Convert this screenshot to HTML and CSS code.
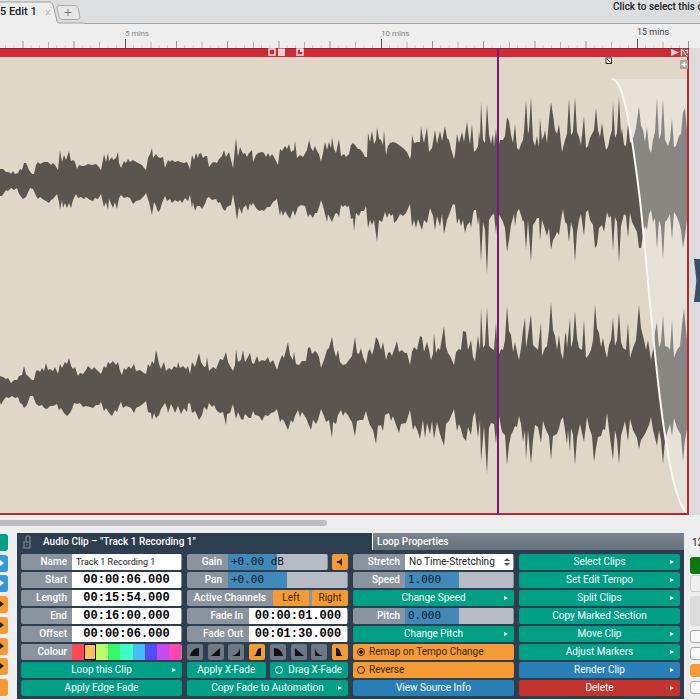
FILE: index.html
```html
<!DOCTYPE html>
<html lang="en">
<head>
<meta charset="utf-8">
<title>Edit 1</title>
<link rel="stylesheet" href="styles.css">
</head>
<body>
<header class="tabs">
  <svg class="tab-shape" width="84" height="24" viewBox="0 0 84 24" aria-hidden="true">
    <path d="M0 2H50Q52 2 53 5L57 22Q57 23 59 23H84V24H0Z" fill="#eee"/>
    <path d="M0 2H50Q52 2 53 5L57 21Q57 23 59 23H84" fill="none" stroke="#a0a0a0"/>
    <path d="M59 5.500H75Q77 6 78 8L80 17Q80 19 78 19.500H62Q60 19 59 17L57 7Q57 6 59 5.500Z" fill="#e6e6e6" stroke="#aaa"/>
    <path d="M64.500 12.500H71.500M68 9V16" stroke="#777"/>
    <path d="M46 10L50 15M50 10L46 15" stroke="#b8b8b8"/>
  </svg>
  <a class="tab" href="#edit">5 Edit 1</a>
  <p class="hint">Click to select this clip</p>
</header>
<div class="ruler">
  <svg class="ticks" width="100%" height="25" aria-hidden="true">
    <defs>
      <pattern id="tick" patternUnits="userSpaceOnUse" x="125" y="0" width="256" height="25">
        <path d="M8.500 21v3M17 21v3M34.100 21v3M42.600 21v3M59.700 21v3M68.200 21v3M85.300 21v3M93.800 21v3M110.900 21v3M119.400 21v3M136.500 21v3M145 21v3M162.100 21v3M170.600 21v3M187.700 21v3M196.200 21v3M213.300 21v3M221.800 21v3M238.900 21v3M247.400 21v3" stroke="#c8c8c8"/>
        <path d="M26 18v6M77 18v6M128.500 18v6M179.500 18v6M230.500 18v6" stroke="#b0b0b0"/>
        <path d="M51.500 17v7M102.500 17v7M154 17v7M205 17v7" stroke="#999"/>
        <path d="M.500 15v9" stroke="#555"/>
      </pattern>
    </defs>
    <rect width="689" height="25" fill="url(#tick)"/>
  </svg>
  <span class="mark m5">5 mins</span><span class="mark m10">10 mins</span><span class="mark m15">15 mins</span>
</div>
<main class="track">
  <svg class="clip" viewBox="0 48 689 467" preserveAspectRatio="none" role="img" aria-label="Track 1 Recording 1 waveform">
    <defs>
      <clipPath id="fade"><path d="M612 79C624 79 632 135 640 200C650 290 663 500 688 514V79Z"/></clipPath>
      <g id="wave">
        <path d="M0 169L3 169 6 172 9 172 11 174 13 171 15 174 18 173 20 169 22 170 24 163 26 163 29 170 32 174 34 174 36 165 38 162 40 164 44 162 48 162 51 165 53 163 55 165 58 170 60 150 62 162 64 155 66 160 69 151 71 161 73 160 75 162 77 169 79 165 82 166 84 166 88 164 92 165 96 164 98 166 101 170 103 160 104 154 106 162 108 153 109 161 112 157 113 160 116 158 118 152 119 163 121 168 124 161 126 163 128 159 130 162 133 160 138 163 142 165 144 168 146 170 148 158 150 154 152 148 153 158 156 154 158 157 160 158 163 157 165 168 168 160 170 162 172 160 175 162 178 161 180 162 184 163 187 162 190 169 192 155 194 160 196 153 198 158 199 154 201 153 203 158 205 156 207 156 209 167 212 163 214 162 217 163 219 159 222 156 224 150 226 157 229 152 231 160 233 168 234 158 236 138 238 157 240 147 243 154 245 153 247 157 249 153 252 150 253 162 256 155 258 153 262 152 264 153 266 157 268 153 270 157 272 154 274 157 278 165 280 149 282 151 285 146 287 149 289 144 291 152 294 150 295 141 297 158 300 155 303 157 307 150 309 140 311 148 313 151 315 146 317 151 319 154 321 162 323 153 325 142 327 150 329 142 331 148 332 137 334 149 336 153 339 139 341 156 344 154 346 157 349 154 351 145 353 143 355 145 358 149 360 149 363 153 365 157 367 157 368 133 370 142 372 131 374 144 376 140 377 127 379 139 381 140 383 145 384 130 386 155 388 146 390 143 393 142 396 143 399 145 403 148 407 152 410 159 411 155 412 135 414 143 417 142 420 142 421 126 423 139 424 143 427 127 429 152 432 148 435 130 437 144 440 131 442 141 445 126 447 138 449 140 451 149 454 159 455 154 457 134 459 143 462 132 464 142 467 122 469 138 470 144 472 124 474 152 476 150 478 146 479 131 480 140 481 102 483 140 485 143 487 104 489 134 491 144 493 134 494 147 496 128 498 150 500 140 503 140 505 136 507 117 509 121 511 135 513 143 515 124 517 148 519 150 521 144 523 140 524 132 526 100 528 134 529 130 531 97 533 140 535 146 537 136 539 147 540 118 542 140 544 135 545 130 547 143 549 120 551 102 553 115 555 130 557 134 559 124 561 143 562 152 565 140 567 134 569 98 571 135 573 132 575 97 577 132 579 137 581 145 584 116 586 148 588 146 590 138 592 134 594 130 596 108 598 130 600 137 602 123 604 138 606 150 608 147 610 137 612 130 613 102 615 138 617 133 619 97 621 134 622 128 624 145 626 146 628 124 630 143 632 140 634 136 636 128 638 113 639 106 641 126 643 130 645 142 647 127 649 148 651 153 653 140 655 132 657 97 659 140 661 134 663 98 665 140 668 146 670 140 672 118 674 147 676 146 679 136 681 134 683 112 685 108 687 130L687 220 685 235 683 248 681 230 679 222 676 215 674 212 672 240 670 214 667 220 665 222 663 260 661 226 659 220 657 249 655 218 653 222 651 210 649 214 647 230 645 226 643 235 641 248 639 248 637 232 635 228 632 222 630 213 628 238 626 216 624 214 621 226 619 263 617 222 615 217 613 250 611 216 609 218 607 212 604 232 602 225 599 228 597 245 595 248 593 225 590 220 588 210 586 212 584 236 581 214 579 220 577 232 575 262 573 230 571 222 569 242 567 224 565 222 563 209 561 220 559 235 557 232 555 237 553 240 551 250 549 228 547 236 544 226 542 220 540 241 539 218 537 218 535 222 533 225 531 262 528 220 526 250 524 220 523 222 521 215 519 209 517 212 515 226 514 214 511 225 509 240 507 252 505 228 503 222 500 216 498 214 496 234 494 214 492 215 489 220 487 275 485 230 483 222 481 262 479 216 478 225 476 210 474 210 473 214 471 228 470 222 467 225 465 233 463 220 461 226 459 218 457 224 455 205 453 204 450 212 447 220 444 234 442 214 440 226 437 216 435 230 433 216 430 208 427 223 424 220 422 230 420 225 418 219 416 228 414 220 412 227 410 204 406 213 403 216 400 214 397 220 394 223 393 214 391 216 389 213 387 218 385 212 382 222 379 220 377 242 374 220 372 225 370 220 368 228 366 206 364 211 361 211 359 216 356 213 354 231 353 218 351 219 349 206 347 207 345 205 343 207 341 205 339 217 337 213 335 214 332 222 330 218 328 214 327 222 325 214 323 206 321 200 320 204 317 213 315 213 313 218 310 214 308 217 305 206 301 205 298 207 295 216 293 210 290 219 288 216 285 211 283 216 281 210 280 216 277 199 273 202 270 207 267 207 264 211 262 210 259 211 256 208 253 203 251 206 250 203 248 211 246 205 243 208 242 214 239 207 237 220 235 206 233 194 231 205 227 207 225 211 223 209 220 202 218 203 216 199 212 200 209 197 207 198 205 204 202 209 200 206 197 206 195 211 193 202 192 208 190 195 188 201 185 198 182 203 180 200 178 202 175 200 172 203 170 199 167 201 165 196 162 203 160 210 158 212 156 206 154 202 152 215 151 211 149 202 146 193 144 196 140 200 136 201 133 204 130 198 127 197 124 198 121 195 119 198 117 209 115 202 113 208 109 199 108 210 106 202 104 207 101 194 98 199 95 198 93 201 90 200 86 197 84 199 81 197 78 198 76 194 73 200 71 208 69 203 67 208 65 203 63 208 62 200 60 210 59 202 57 194 53 199 51 200 49 203 46 201 44 200 40 197 38 199 36 196 33 189 30 188 26 197 23 199 19 194 17 188 14 190 11 188 8 191 6 190 2 196 0 196Z"/>
        <path d="M0 376L3 377 6 379 8 378 11 383 14 380 17 380 19 376 22 375 24 366 26 374 29 377 32 380 34 380 36 371 38 370 40 372 42 368 44 371 46 363 48 370 50 369 53 371 55 367 58 374 60 364 62 368 65 362 67 364 69 358 71 366 73 369 75 367 78 376 80 373 83 374 86 370 88 366 90 368 92 370 94 367 97 370 101 374 104 366 106 368 108 362 110 364 113 361 116 365 118 362 120 371 122 375 124 368 126 370 129 366 131 369 134 364 136 371 140 370 144 373 146 374 148 364 150 367 152 361 154 364 156 350 157 354 159 364 161 369 164 362 166 371 169 368 172 370 174 366 177 368 178 362 180 368 183 366 186 369 188 366 190 374 192 362 195 367 197 360 199 353 201 362 204 367 206 366 207 357 209 371 213 367 216 369 218 364 220 359 223 360 226 352 228 362 230 366 233 371 235 365 236 349 238 362 241 360 243 350 245 362 248 357 250 353 252 363 254 364 257 356 259 362 262 360 265 361 268 357 270 363 273 360 277 370 279 363 282 355 284 358 288 342 290 355 293 360 294 352 296 364 299 365 302 361 306 361 308 348 310 347 312 354 315 351 317 353 319 357 321 368 324 360 327 350 329 348 332 337 334 350 336 357 338 350 340 362 343 365 346 364 349 360 352 356 355 337 357 353 359 354 361 348 363 357 366 364 368 352 370 349 372 355 374 348 376 337 378 340 381 350 383 342 386 360 388 353 390 352 392 356 394 350 397 341 399 352 402 350 405 353 407 353 410 365 412 352 414 347 417 350 420 336 422 337 424 352 427 342 429 350 431 360 433 354 434 333 436 353 438 348 440 350 444 326 446 347 448 353 450 356 454 365 456 352 459 349 461 350 463 331 466 332 468 350 470 344 471 340 473 357 475 361 478 336 480 350 481 308 483 348 485 345 487 307 489 346 491 348 494 350 496 322 498 357 501 349 503 350 505 340 507 306 509 331 511 335 513 352 515 342 517 352 519 360 521 348 523 330 525 318 526 348 528 335 531 314 533 345 536 348 538 350 541 322 542 356 545 348 547 346 549 330 551 302 553 330 555 336 557 350 559 335 561 353 563 359 565 336 566 332 567 348 570 318 571 348 573 340 575 311 577 338 579 348 582 350 584 320 586 358 588 356 591 350 593 340 595 305 597 328 599 333 601 347 603 338 605 350 607 358 609 345 611 340 613 318 615 346 617 340 619 312 621 342 623 348 626 350 628 322 630 358 633 348 636 340 639 305 641 328 644 340 646 350 648 340 651 360 653 350 655 332 657 322 659 348 661 342 663 315 665 346 668 347 670 350 672 320 674 358 677 350 680 346 682 325 684 308 686 330 687 340L687 430 685 440 683 462 681 435 677 428 674 418 672 436 670 424 668 430 665 440 663 464 661 440 659 430 657 446 653 430 651 417 649 425 645 434 641 440 639 449 637 438 633 430 630 419 628 441 625 421 621 436 619 464 617 440 615 430 613 460 609 430 607 413 605 430 603 429 601 436 598 437 596 448 594 462 592 436 589 427 587 417 584 442 580 424 577 438 575 465 573 435 571 428 570 452 568 430 567 444 565 430 563 417 561 420 559 428 557 434 553 436 551 460 549 436 546 430 543 421 541 443 538 427 535 425 533 440 531 464 528 430 526 460 525 430 523 442 521 424 519 416 517 427 515 426 513 431 511 435 509 445 507 465 505 435 502 432 499 416 498 420 496 444 494 424 491 423 489 428 487 474 484 426 481 462 480 420 478 438 475 412 473 417 471 435 468 427 466 441 463 437 461 429 459 424 457 431 454 409 449 421 446 424 444 446 440 434 437 422 434 439 432 421 430 434 427 423 425 438 423 420 420 439 418 432 415 425 413 430 410 410 406 423 401 424 399 433 395 422 393 416 391 421 389 413 385 415 383 431 381 425 378 426 376 444 373 430 370 425 368 419 366 411 363 420 360 420 357 421 355 436 352 422 350 419 348 415 345 412 343 416 341 410 338 415 336 424 333 422 332 438 329 420 326 422 324 416 321 409 318 420 316 424 313 420 311 430 308 423 306 418 302 412 300 417 298 410 295 416 293 423 291 420 288 430 284 421 282 419 280 422 277 409 274 412 271 413 268 416 265 415 262 421 259 416 255 415 253 411 251 418 249 418 245 414 243 420 241 419 238 412 236 419 233 404 230 413 227 414 226 425 223 412 220 413 217 411 214 405 212 407 209 403 207 410 204 407 202 415 199 420 197 415 195 411 192 413 190 403 188 404 187 412 184 408 181 414 178 406 175 413 173 408 171 404 168 413 167 408 165 403 161 409 159 415 156 418 154 413 152 420 151 413 148 412 146 401 144 403 140 406 136 408 134 413 131 408 129 407 126 406 123 408 121 402 119 406 117 412 115 410 112 416 109 413 106 408 104 411 101 402 99 405 96 405 93 408 90 407 86 406 83 407 80 403 77 404 74 403 72 409 70 413 67 416 64 413 61 408 59 410 57 404 53 406 50 406 47 409 44 408 42 405 39 406 36 404 33 396 30 396 27 405 24 408 22 404 20 403 18 397 15 398 12 396 9 398 6 397 3 401 1 405 0 402Z"/>
      </g>
    </defs>
    <rect y="48" width="689" height="467" fill="#e0d7c8"/>
    <use href="#wave" fill="#5a554e"/>
    <g clip-path="url(#fade)">
      <rect x="600" y="79" width="89" height="436" fill="#e8e1d8"/>
      <use href="#wave" fill="#888680"/>
    </g>
    <path d="M612 79C624 79 632 135 640 200C650 290 663 500 688 514" fill="none" stroke="#faf7f2" stroke-width="2"/>
    <rect y="48" width="689" height="9" fill="#cf2b37"/>
    <path d="M0 48H689" stroke="#6e1b22"/>
    <path d="M0 514H688V57" fill="none" stroke="#b92734" stroke-width="2"/>
    <g>
      <rect x="269" y="49" width="6" height="6" fill="#cf2b37" stroke="#fbe3e3" stroke-width="1.500"/>
      <rect x="278" y="48.500" width="7" height="7.500" fill="#f8cfd2"/>
      <rect x="297" y="49" width="6" height="6" fill="#cf2b37" stroke="#fbe3e3" stroke-width="1.500"/>
      <path d="M300 49H303V52H300Z" fill="#fbe3e3"/>
      <path d="M671 49L679 52.500 671 56Z" fill="#f8dde0"/>
      <rect x="680" y="48.500" width="8" height="8.500" fill="#b95a5c"/>
      <path d="M681.500 49V56M681.500 50C685 50 684 55 687.500 56M685 50.500H687.500V53" fill="none" stroke="#fff"/>
      <rect x="606" y="58" width="5.500" height="5.500" fill="#fff" stroke="#333"/>
      <path d="M607 59L610.500 62.500" stroke="#333"/>
      <rect x="680" y="60" width="8" height="9" fill="#aca59c"/>
      <path d="M681.500 64.500H687M684.300 62V67" stroke="#fff" stroke-width="1.500"/>
    </g>
    <path d="M498 48V515" stroke="#83147f" stroke-width="2"/>
  </svg>
  <aside class="gutter"><span class="handle"></span></aside>
</main>
<div class="scroll"><span class="thumb"></span></div>
<footer class="dock">
  <nav class="strip left" aria-label="Tools">
    <button class="green"></button><button class="sky"><i class="arrow"></i></button><button class="sky"><i class="arrow"></i></button><button class="orange"><i class="arrow"></i></button><button class="orange"><i class="arrow"></i></button><button class="orange"><i class="arrow"></i></button><button class="orange"><i class="arrow"></i></button><button class="orange"></button>
  </nav>
  <section class="panel">
    <div class="titles">
      <h2 class="title">
        <svg class="lock" width="10" height="14" viewBox="0 0 10 14" aria-hidden="true"><path d="M4 6V3Q4 1 6 1Q8 1 8 3V6" fill="none" stroke="#6f7c88" stroke-width="1.500"/><path d="M2 7H8V13H2Z" fill="none" stroke="#6f7c88" stroke-width="1.500"/><path d="M5 9V11" stroke="#6f7c88"/></svg>
        <span>Audio Clip – "Track 1 Recording 1"</span>
      </h2>
      <h2 class="title other">Loop Properties</h2>
    </div>
    <div class="cols">
      <div class="col first">
        <div class="row"><label for="name">Name</label><input id="name" class="name" value="Track 1 Recording 1"></div>
        <div class="row"><label for="start">Start</label><input id="start" class="time" value="00:00:06.000"></div>
        <div class="row"><label for="length">Length</label><input id="length" class="time" value="00:15:54.000"></div>
        <div class="row"><label for="end">End</label><input id="end" class="time" value="00:16:00.000"></div>
        <div class="row"><label for="offset">Offset</label><input id="offset" class="time" value="00:00:06.000"></div>
        <div class="row"><span class="label">Colour</span><div class="swatches"><button class="c1" aria-label="Red"></button><button class="c2" aria-label="Orange"></button><button class="c3" aria-label="Lime"></button><button class="c4" aria-label="Green"></button><button class="c5" aria-label="Aqua"></button><button class="c6" aria-label="Sky"></button><button class="c7" aria-label="Blue"></button><button class="c8" aria-label="Violet"></button><button class="c9" aria-label="Pink"></button></div></div>
        <button class="btn green">Loop this Clip<i class="arrow"></i></button>
        <button class="btn green">Apply Edge Fade</button>
      </div>
      <div class="col second">
        <div class="pair"><div class="row grow"><label for="gain">Gain</label><input id="gain" class="level half" value="+0.00 dB"></div><button class="btn orange icon" aria-label="Mute"><svg width="8" height="8" viewBox="0 0 8 8"><path d="M1 3H3L6 0V8L3 5H1Z" fill="#3a2508"/></svg></button></div>
        <div class="row"><label for="pan">Pan</label><input id="pan" class="level half" value="+0.00"></div>
        <div class="row channels"><span class="label">Active Channels</span><button class="btn orange">Left</button><button class="btn orange">Right</button></div>
        <div class="row fades"><label for="fin">Fade In</label><input id="fin" class="time" value="00:00:01.000"></div>
        <div class="row fades"><label for="fout">Fade Out</label><input id="fout" class="time" value="00:01:30.000"></div>
        <div class="shapes">
          <button aria-label="Fade in 1"><svg viewBox="0 0 16 16"><path d="M3 12Q5 4 12 4V12Z"/></svg></button>
          <button aria-label="Fade in 2"><svg viewBox="0 0 16 16"><path d="M3 12L12 4V12Z"/></svg></button>
          <button aria-label="Fade in 3"><svg viewBox="0 0 16 16"><path d="M4 12Q11 10 12 4V12Z"/></svg></button>
          <button class="orange" aria-label="Fade in 4"><svg viewBox="0 0 16 16"><path d="M4 12C9 12 6 4 12 4V12Z"/></svg></button>
          <button aria-label="Fade out 1"><svg viewBox="0 0 16 16"><path d="M4 12V4Q11 4 13 12Z"/></svg></button>
          <button aria-label="Fade out 2"><svg viewBox="0 0 16 16"><path d="M4 12V4L13 12Z"/></svg></button>
          <button aria-label="Fade out 3"><svg viewBox="0 0 16 16"><path d="M4 12V4Q5 10 12 12Z"/></svg></button>
          <button class="orange" aria-label="Fade out 4"><svg viewBox="0 0 16 16"><path d="M4 12V4C10 4 7 12 12 12Z"/></svg></button>
        </div>
        <div class="pair"><button class="btn green">Apply X-Fade</button><button class="btn green"><i class="ring"></i>Drag X-Fade</button></div>
        <button class="btn green">Copy Fade to Automation<i class="arrow"></i></button>
      </div>
      <div class="col third">
        <div class="row"><label for="stretch">Stretch</label><div class="pick"><select id="stretch"><option>No Time-Stretching</option></select><svg class="updown" width="6" height="8" viewBox="0 0 6 8" aria-hidden="true"><path d="M0 3L3 0 6 3ZM0 5L3 8 6 5Z" fill="#555"/></svg></div></div>
        <div class="row"><label for="speed">Speed</label><input id="speed" class="level half" value="1.000"></div>
        <button class="btn green">Change Speed<i class="arrow"></i></button>
        <div class="row"><label for="pitch">Pitch</label><input id="pitch" class="level half" value="0.000"></div>
        <button class="btn green">Change Pitch<i class="arrow"></i></button>
        <label class="btn orange toggle"><input type="checkbox" checked>Remap on Tempo Change</label>
        <label class="btn orange toggle"><input type="checkbox">Reverse</label>
        <button class="btn blue">View Source Info</button>
      </div>
      <div class="col">
        <button class="btn green">Select Clips<i class="arrow"></i></button>
        <button class="btn green">Set Edit Tempo<i class="arrow"></i></button>
        <button class="btn green">Split Clips<i class="arrow"></i></button>
        <button class="btn green">Copy Marked Section</button>
        <button class="btn green">Move Clip<i class="arrow"></i></button>
        <button class="btn green">Adjust Markers<i class="arrow"></i></button>
        <button class="btn blue">Render Clip<i class="arrow"></i></button>
        <button class="btn red">Delete<i class="arrow"></i></button>
      </div>
    </div>
  </section>
  <aside class="strip right" aria-label="Transport">
    <span class="tempo">120</span><button class="play"></button><button class="plain"></button><span class="block"></span><button class="box"></button><button class="box"></button><button class="box amber"></button><button class="box"></button>
  </aside>
</footer>
</body>
</html>
```
FILE: styles.css
```css
* { box-sizing: border-box; }
body {
  margin: 0;
  height: 100vh;
  overflow: hidden;
  display: flex;
  flex-direction: column;
  background: #eee;
  font: 10px/16px Roboto, sans-serif;
  color: #222;
}
button, input, select { font: inherit; color: inherit; border: 0; margin: 0; padding: 0; min-width: 0; }

.tabs {
  position: relative;
  display: flex;
  justify-content: space-between;
  height: 24px;
  background: #dcddde;
  border-bottom: 1px solid #a0a0a0;
}
.tab-shape { position: absolute; left: 0; top: 0; }
.tab { position: relative; color: #222; text-decoration: none; font-size: 11px; font-weight: 500; line-height: 24px; }
.hint { margin: 0; width: 87px; overflow: hidden; white-space: nowrap; line-height: 14px; font-weight: 500; }

.ruler { position: relative; height: 24px; }
.ticks { display: block; }
.mark { position: absolute; top: 2px; font-size: 8px; color: #888; }
.m5 { left: 125px; }
.m10 { left: 381px; }
.m15 { left: 637px; top: 0; font-size: 9px; color: #444; }

.track { flex: 1; min-height: 0; display: flex; }
.clip { flex: 1; min-width: 0; height: 100%; display: block; }
.gutter { position: relative; width: 11px; background: #dcdcdc; }
.handle {
  position: absolute;
  right: 0;
  top: 211px;
  width: 6px;
  height: 43px;
  background: #34506a;
  clip-path: polygon(0 0, 100% 0, 100% 100%, 0 100%, 40% 50%);
}

.scroll { height: 18px; padding-top: 5px; }
.thumb { display: block; width: 327px; height: 6px; border-radius: 0 3px 3px 0; background: #bebebe; }

.dock { display: flex; align-items: flex-start; height: 167px; }
.strip { display: flex; flex-direction: column; }
.left { width: 17px; height: 162px; margin-top: 1px; padding-right: 9px; justify-content: space-between; }
.left button { position: relative; height: 17px; border-radius: 0 3px 3px 0; }
.left .arrow { left: 0; right: auto; top: 5px; border-width: 3px 0 3px 4px; }
.left .orange .arrow { border-left-color: #222; }

.panel { flex: 1; min-width: 0; background: #2c3e50; }
.titles { display: grid; grid-template-columns: 355px 1fr; height: 17px; }
.title { display: flex; align-items: center; margin: 0; padding-left: 5px; gap: 11px; font-size: 10px; font-weight: 500; color: #fff; white-space: nowrap; line-height: 17px; }
.other { padding-left: 4px; border-left: 1px solid #fff; background: linear-gradient(#7a858e, #65717b); }
.cols { display: grid; grid-template-columns: repeat(4, 1fr); gap: 5px; padding: 4px 4px 3px; }
.col { display: grid; grid-template-rows: repeat(8, 16px); grid-template-columns: minmax(0, 1fr); gap: 2px; }

.row { display: flex; background: #8a949e; border-radius: 2px; overflow: hidden; padding-right: 1px; }
.row > label, .label { flex: none; width: 51px; padding-right: 5px; text-align: right; color: #fff; font-weight: 500; white-space: nowrap; }
.second .label, .second label { width: 41px; padding-right: 6px; }
.third .row > label { width: 52px; }
.second .fades label { width: 62px; }
.row input, .pick, .swatches { flex: 1; }
.name, .time { background: #fff; color: #222; }
.name { padding-left: 4px; font-size: 9px; }
.time { text-align: center; color: #000; font: bold 12px/16px "Liberation Mono", monospace; }
.swatches { display: grid; grid-template-columns: repeat(9, 1fr); }
.swatches button { border-radius: 0; }
.c1 { background: #ff4a55; }
.swatches .c2 { background: #ffbf58; border: 1px solid #111; }
.c3 { background: #b9fb68; }
.c4 { background: #36f96c; }
.c5 { background: #3fffc5; }
.c6 { background: #46bdf9; }
.c7 { background: #504df5; }
.c8 { background: #c44af2; }
.c9 { background: #ff46b0; }

.level { padding-left: 3px; background: linear-gradient(90deg, #4089b9 50%, #b7bcc4 50%); color: #12212c; font: 11px/16px "DejaVu Sans Mono", monospace; }
.grow { flex: 1; min-width: 0; }
.pair { display: flex; gap: 4px; }
.pair > .btn { flex: 1; }
.pair > .icon { flex: 0 0 16px; }
.channels { gap: 3px; padding-right: 0; }
.second .channels .label { flex: 1; padding-right: 4px; width: auto; }
.channels .btn { flex: 0 0 36px; }
.shapes { display: flex; justify-content: space-between; }
.shapes button { width: 16px; height: 16px; background: #6c7884; border-radius: 2px; }
.shapes svg { display: block; width: 16px; height: 16px; fill: #111; }

.btn { position: relative; display: flex; align-items: center; justify-content: center; border-radius: 2px; color: #fff; white-space: nowrap; }
.green { background: #00a087; }
.blue { background: #2980b9; }
.sky { background: #3498db; }
.red { background: #c3342f; }
.orange, .shapes .orange { background: #f59b35; color: #3a2508; }
.arrow { position: absolute; right: 6px; top: 6px; border: solid transparent; border-width: 2px 0 2px 4px; border-left-color: #fff; }
.ring { width: 8px; height: 8px; margin-right: 5px; border: 1px solid #fff; border-radius: 50%; }
.toggle { justify-content: flex-start; gap: 4px; padding-left: 4px; }
.toggle input { appearance: none; width: 8px; height: 8px; border: 1px solid #3a2508; border-radius: 50%; }
.toggle input:checked { background: radial-gradient(#3a2508 45%, transparent 50%); }
.pick { position: relative; background: #fff; }
.pick select { appearance: none; width: 100%; height: 16px; padding-left: 4px; background: none; color: #222; }
.updown { position: absolute; right: 3px; top: 4px; pointer-events: none; }

.right { width: 16px; padding-left: 6px; height: 163px; gap: 4px; }
.right > * { border-radius: 3px 0 0 3px; margin-right: -2px; }
.tempo { height: 20px; overflow: hidden; padding: 2px 0 0 2px; width: 12px; }
.play { height: 17px; background: #0a780e; }
.plain { height: 17px; margin-top: -3px; background: #eee; border: 1px solid #ccc; }
.block { height: 30px; background: #dcdcdc; }
.box { height: 13px; background: #f8f8f8; border: 1px solid #aaa; }
.amber { background: #f59b35; border-color: #f59b35; }
```
